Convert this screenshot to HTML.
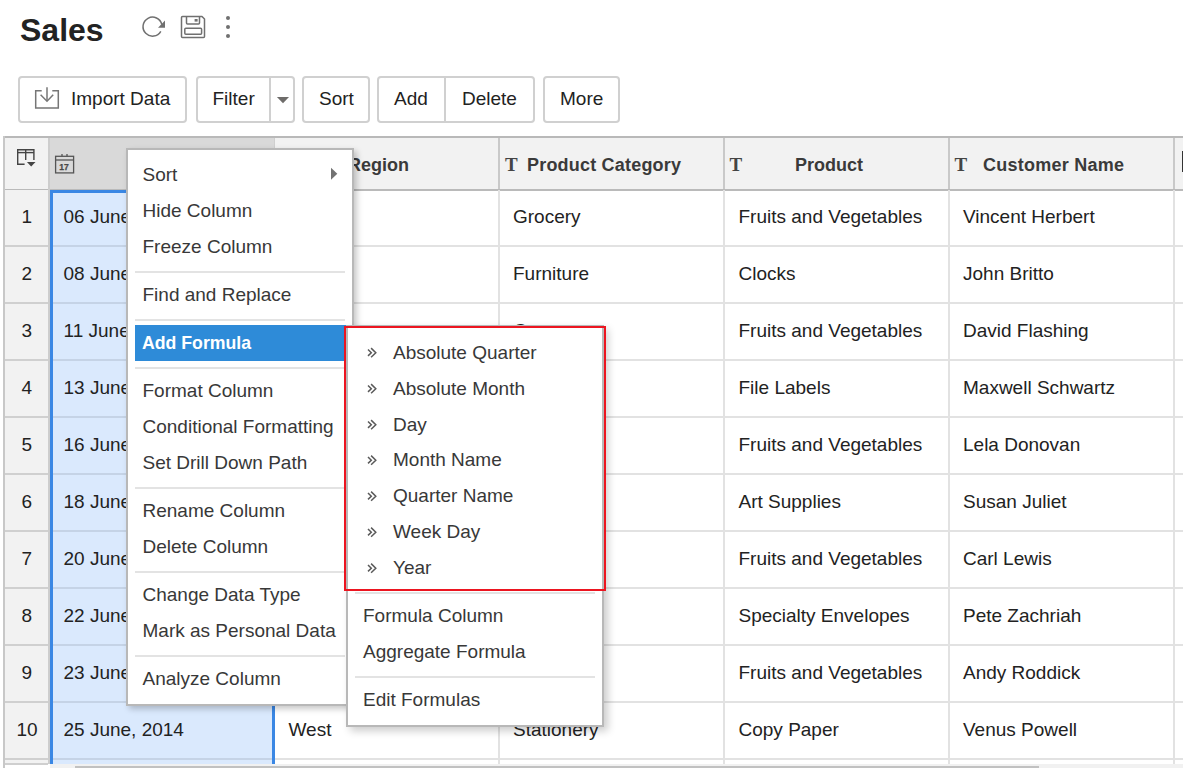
<!DOCTYPE html>
<html><head><meta charset="utf-8"><style>
html,body{margin:0;padding:0;width:1183px;height:768px;overflow:hidden;background:#fff;position:relative;font-family:"Liberation Sans", sans-serif;}
.t{position:absolute;white-space:nowrap;line-height:normal;}
.r{position:absolute;}
</style></head><body>
<div class="t" style="left:20px;top:12px;font-size:32px;color:#222;font-weight:700;">Sales</div>
<svg class="r" style="left:138px;top:12px" width="100" height="30" viewBox="138 12 100 30">
<g fill="none" stroke="#707070" stroke-width="1.5">
<path d="M160.8 31.3 A9.5 9.5 0 1 1 161.8 24.6"/>
<path d="M182.5 16.5 H202 L204.5 19 V36.5 Q204.5 37.5 203.5 37.5 H182.5 Q181.5 37.5 181.5 36.5 V17.5 Q181.5 16.5 182.5 16.5 Z" stroke-linejoin="round"/>
<path d="M186.5 16.5 V23 Q186.5 24 187.5 24 H198.5 Q199.5 24 199.5 23 V16.5"/>
<rect x="184.8" y="28.3" width="16.8" height="6" rx="1"/>
</g>
<path d="M165 20.6 L165 27.7 L158 27.7 Z" fill="#707070"/>
<rect x="194.6" y="19" width="3" height="2.6" fill="#707070"/>
<circle cx="228" cy="18" r="2" fill="#707070"/>
<circle cx="228" cy="27" r="2" fill="#707070"/>
<circle cx="228" cy="36" r="2" fill="#707070"/>
</svg>
<div class="r" style="left:18px;top:76px;width:169px;height:47px;box-sizing:border-box;border:2px solid #d0d0d0;border-radius:4px;background:#fff;"></div>
<div class="r" style="left:196px;top:76px;width:99px;height:47px;box-sizing:border-box;border:2px solid #d0d0d0;border-radius:4px;background:#fff;"></div>
<div class="r" style="left:269px;top:77px;width:2px;height:45px;background:#d0d0d0;"></div>
<div class="r" style="left:302px;top:76px;width:68px;height:47px;box-sizing:border-box;border:2px solid #d0d0d0;border-radius:4px;background:#fff;"></div>
<div class="r" style="left:377px;top:76px;width:158px;height:47px;box-sizing:border-box;border:2px solid #d0d0d0;border-radius:4px;background:#fff;"></div>
<div class="r" style="left:444px;top:77px;width:2px;height:45px;background:#d0d0d0;"></div>
<div class="r" style="left:543px;top:76px;width:77px;height:47px;box-sizing:border-box;border:2px solid #d0d0d0;border-radius:4px;background:#fff;"></div>
<div class="t" style="left:71px;top:88px;font-size:19px;color:#222;">Import Data</div>
<div class="t" style="left:212.5px;top:88px;font-size:19px;color:#222;">Filter</div>
<div class="t" style="left:319px;top:88px;font-size:19px;color:#222;">Sort</div>
<div class="t" style="left:394px;top:88px;font-size:19px;color:#222;">Add</div>
<div class="t" style="left:462px;top:88px;font-size:19px;color:#222;">Delete</div>
<div class="t" style="left:560px;top:88px;font-size:19px;color:#222;">More</div>
<svg class="r" style="left:30px;top:82px" width="35" height="32" viewBox="30 82 35 32">
<g fill="none" stroke="#767676" stroke-width="1.5">
<path d="M41.7 90.8 H35.7 V108 H58.3 V90.8 H52.3"/>
<path d="M47 87.2 V101"/>
<path d="M40.6 94.8 L47 101.2 L53.2 94.8"/>
</g></svg>
<svg class="r" style="left:270px;top:90px" width="25" height="20" viewBox="270 90 25 20">
<path d="M276.9 97 H289 L283 103.2 Z" fill="#6e6c6a"/></svg>
<div class="r" style="left:5px;top:138px;width:1178px;height:51px;background:#f2f2f2;"></div>
<div class="r" style="left:50px;top:138px;width:224px;height:51px;background:#d9d9d9;"></div>
<div class="r" style="left:3px;top:136px;width:1180px;height:2px;background:#b9b9b9;"></div>
<div class="r" style="left:3px;top:136px;width:2px;height:632px;background:#c8c8c8;"></div>
<div class="r" style="left:5px;top:189px;width:1178px;height:1.5px;background:#bababa;"></div>
<div class="r" style="left:5px;top:190px;width:43px;height:574px;background:#f2f2f2;"></div>
<div class="r" style="left:48px;top:138px;width:2px;height:626px;background:#cdcdcd;"></div>
<div class="r" style="left:498px;top:138px;width:2px;height:51px;background:#c9c9c9;"></div>
<div class="r" style="left:498px;top:190px;width:2px;height:574px;background:#e2e2e2;"></div>
<div class="r" style="left:723px;top:138px;width:2px;height:51px;background:#c9c9c9;"></div>
<div class="r" style="left:723px;top:190px;width:2px;height:574px;background:#e2e2e2;"></div>
<div class="r" style="left:948px;top:138px;width:2px;height:51px;background:#c9c9c9;"></div>
<div class="r" style="left:948px;top:190px;width:2px;height:574px;background:#e2e2e2;"></div>
<div class="r" style="left:1173px;top:138px;width:2px;height:51px;background:#c9c9c9;"></div>
<div class="r" style="left:1173px;top:190px;width:2px;height:574px;background:#e2e2e2;"></div>
<div class="r" style="left:274px;top:138px;width:1px;height:51px;background:#cfcfcf;"></div>
<div class="r" style="left:50px;top:190px;width:225px;height:574px;background:#dae9fd;"></div>
<div class="r" style="left:5px;top:245px;width:43px;height:2px;background:#d0d0d0;"></div>
<div class="r" style="left:275px;top:245px;width:908px;height:1.6px;background:#e2e2e2;"></div>
<div class="r" style="left:53px;top:245px;width:219px;height:1.6px;background:#c5d3e6;"></div>
<div class="r" style="left:5px;top:302px;width:43px;height:2px;background:#d0d0d0;"></div>
<div class="r" style="left:275px;top:302px;width:908px;height:1.6px;background:#e2e2e2;"></div>
<div class="r" style="left:53px;top:302px;width:219px;height:1.6px;background:#c5d3e6;"></div>
<div class="r" style="left:5px;top:359px;width:43px;height:2px;background:#d0d0d0;"></div>
<div class="r" style="left:275px;top:359px;width:908px;height:1.6px;background:#e2e2e2;"></div>
<div class="r" style="left:53px;top:359px;width:219px;height:1.6px;background:#c5d3e6;"></div>
<div class="r" style="left:5px;top:416px;width:43px;height:2px;background:#d0d0d0;"></div>
<div class="r" style="left:275px;top:416px;width:908px;height:1.6px;background:#e2e2e2;"></div>
<div class="r" style="left:53px;top:416px;width:219px;height:1.6px;background:#c5d3e6;"></div>
<div class="r" style="left:5px;top:473px;width:43px;height:2px;background:#d0d0d0;"></div>
<div class="r" style="left:275px;top:473px;width:908px;height:1.6px;background:#e2e2e2;"></div>
<div class="r" style="left:53px;top:473px;width:219px;height:1.6px;background:#c5d3e6;"></div>
<div class="r" style="left:5px;top:530px;width:43px;height:2px;background:#d0d0d0;"></div>
<div class="r" style="left:275px;top:530px;width:908px;height:1.6px;background:#e2e2e2;"></div>
<div class="r" style="left:53px;top:530px;width:219px;height:1.6px;background:#c5d3e6;"></div>
<div class="r" style="left:5px;top:587px;width:43px;height:2px;background:#d0d0d0;"></div>
<div class="r" style="left:275px;top:587px;width:908px;height:1.6px;background:#e2e2e2;"></div>
<div class="r" style="left:53px;top:587px;width:219px;height:1.6px;background:#c5d3e6;"></div>
<div class="r" style="left:5px;top:644px;width:43px;height:2px;background:#d0d0d0;"></div>
<div class="r" style="left:275px;top:644px;width:908px;height:1.6px;background:#e2e2e2;"></div>
<div class="r" style="left:53px;top:644px;width:219px;height:1.6px;background:#c5d3e6;"></div>
<div class="r" style="left:5px;top:701px;width:43px;height:2px;background:#d0d0d0;"></div>
<div class="r" style="left:275px;top:701px;width:908px;height:1.6px;background:#e2e2e2;"></div>
<div class="r" style="left:53px;top:701px;width:219px;height:1.6px;background:#c5d3e6;"></div>
<div class="r" style="left:5px;top:758px;width:43px;height:2px;background:#d0d0d0;"></div>
<div class="r" style="left:275px;top:758px;width:908px;height:1.6px;background:#e2e2e2;"></div>
<div class="r" style="left:53px;top:758px;width:219px;height:1.6px;background:#c5d3e6;"></div>
<div class="r" style="left:5px;top:762.5px;width:43px;height:2px;background:#cfcfcf;"></div>
<div class="r" style="left:50px;top:190px;width:225px;height:3px;background:#3a87e4;"></div>
<div class="r" style="left:50px;top:190px;width:3px;height:574px;background:#3a87e4;"></div>
<div class="r" style="left:272px;top:190px;width:3px;height:574px;background:#3a87e4;"></div>
<div class="r" style="left:50px;top:764px;width:1133px;height:4px;background:#f1f1f1;"></div>
<div class="r" style="left:75px;top:766px;width:964px;height:2px;background:#c1c1c1;"></div>
<svg class="r" style="left:10px;top:140px" width="70" height="40" viewBox="10 140 70 40">
<g fill="none" stroke="#444" stroke-width="1.4">
<path d="M24.6 164.3 H17.7 V149.7 H33.9 V160"/>
<path d="M17.7 152.6 H33.9"/>
<path d="M25.7 149.7 V160"/>
</g>
<path d="M26.9 161.9 H35.5 L31.2 166.4 Z" fill="#444"/>
<g fill="none" stroke="#555" stroke-width="1.3">
<rect x="55.6" y="156.3" width="18" height="16.6"/>
<path d="M55.6 160 H73.6"/>
<path d="M62 154 V156.3 M67 154 V156.3"/>
</g>
<text x="64" y="170.4" font-family="Liberation Sans" font-weight="700" font-size="8.6" fill="#484848" stroke="#484848" stroke-width="0.25" text-anchor="middle">17</text>
</svg>
<div class="t" style="left:280.5px;top:154px;font-family:'Liberation Serif',serif;font-weight:700;font-size:19px;color:#444;">T</div>
<div class="t" style="left:348px;top:155px;font-size:18px;color:#3a3a3a;font-weight:700;">Region</div>
<div class="t" style="left:505.0px;top:154px;font-family:'Liberation Serif',serif;font-weight:700;font-size:19px;color:#444;">T</div>
<div class="t" style="left:527px;top:155px;font-size:18px;color:#3a3a3a;font-weight:700;letter-spacing:0.2px;">Product Category</div>
<div class="t" style="left:729.5px;top:154px;font-family:'Liberation Serif',serif;font-weight:700;font-size:19px;color:#444;">T</div>
<div class="t" style="left:795px;top:155px;font-size:18px;color:#3a3a3a;font-weight:700;">Product</div>
<div class="t" style="left:954.5px;top:154px;font-family:'Liberation Serif',serif;font-weight:700;font-size:19px;color:#444;">T</div>
<div class="t" style="left:983px;top:155px;font-size:18px;color:#3a3a3a;font-weight:700;letter-spacing:0.25px;">Customer Name</div>
<div class="r" style="left:1181.5px;top:151px;width:1.6px;height:21px;background:#333;"></div>
<div class="t" style="left:21.5px;top:206px;font-size:19px;color:#222;">1</div>
<div class="t" style="left:63.5px;top:206px;font-size:19px;color:#222;">06 June, 2014</div>
<div class="t" style="left:288.5px;top:206px;font-size:19px;color:#222;">Central</div>
<div class="t" style="left:513px;top:206px;font-size:19px;color:#222;">Grocery</div>
<div class="t" style="left:738.5px;top:206px;font-size:19px;color:#222;">Fruits and Vegetables</div>
<div class="t" style="left:963px;top:206px;font-size:19px;color:#222;">Vincent Herbert</div>
<div class="t" style="left:21.5px;top:263px;font-size:19px;color:#222;">2</div>
<div class="t" style="left:63.5px;top:263px;font-size:19px;color:#222;">08 June, 2014</div>
<div class="t" style="left:288.5px;top:263px;font-size:19px;color:#222;">East</div>
<div class="t" style="left:513px;top:263px;font-size:19px;color:#222;">Furniture</div>
<div class="t" style="left:738.5px;top:263px;font-size:19px;color:#222;">Clocks</div>
<div class="t" style="left:963px;top:263px;font-size:19px;color:#222;">John Britto</div>
<div class="t" style="left:21.5px;top:320px;font-size:19px;color:#222;">3</div>
<div class="t" style="left:63.5px;top:320px;font-size:19px;color:#222;">11 June, 2014</div>
<div class="t" style="left:288.5px;top:320px;font-size:19px;color:#222;">West</div>
<div class="t" style="left:513px;top:320px;font-size:19px;color:#222;">Grocery</div>
<div class="t" style="left:738.5px;top:320px;font-size:19px;color:#222;">Fruits and Vegetables</div>
<div class="t" style="left:963px;top:320px;font-size:19px;color:#222;">David Flashing</div>
<div class="t" style="left:21.5px;top:377px;font-size:19px;color:#222;">4</div>
<div class="t" style="left:63.5px;top:377px;font-size:19px;color:#222;">13 June, 2014</div>
<div class="t" style="left:288.5px;top:377px;font-size:19px;color:#222;">Central</div>
<div class="t" style="left:513px;top:377px;font-size:19px;color:#222;">Stationery</div>
<div class="t" style="left:738.5px;top:377px;font-size:19px;color:#222;">File Labels</div>
<div class="t" style="left:963px;top:377px;font-size:19px;color:#222;">Maxwell Schwartz</div>
<div class="t" style="left:21.5px;top:434px;font-size:19px;color:#222;">5</div>
<div class="t" style="left:63.5px;top:434px;font-size:19px;color:#222;">16 June, 2014</div>
<div class="t" style="left:288.5px;top:434px;font-size:19px;color:#222;">East</div>
<div class="t" style="left:513px;top:434px;font-size:19px;color:#222;">Grocery</div>
<div class="t" style="left:738.5px;top:434px;font-size:19px;color:#222;">Fruits and Vegetables</div>
<div class="t" style="left:963px;top:434px;font-size:19px;color:#222;">Lela Donovan</div>
<div class="t" style="left:21.5px;top:491px;font-size:19px;color:#222;">6</div>
<div class="t" style="left:63.5px;top:491px;font-size:19px;color:#222;">18 June, 2014</div>
<div class="t" style="left:288.5px;top:491px;font-size:19px;color:#222;">South</div>
<div class="t" style="left:513px;top:491px;font-size:19px;color:#222;">Stationery</div>
<div class="t" style="left:738.5px;top:491px;font-size:19px;color:#222;">Art Supplies</div>
<div class="t" style="left:963px;top:491px;font-size:19px;color:#222;">Susan Juliet</div>
<div class="t" style="left:21.5px;top:548px;font-size:19px;color:#222;">7</div>
<div class="t" style="left:63.5px;top:548px;font-size:19px;color:#222;">20 June, 2014</div>
<div class="t" style="left:288.5px;top:548px;font-size:19px;color:#222;">West</div>
<div class="t" style="left:513px;top:548px;font-size:19px;color:#222;">Grocery</div>
<div class="t" style="left:738.5px;top:548px;font-size:19px;color:#222;">Fruits and Vegetables</div>
<div class="t" style="left:963px;top:548px;font-size:19px;color:#222;">Carl Lewis</div>
<div class="t" style="left:21.5px;top:605px;font-size:19px;color:#222;">8</div>
<div class="t" style="left:63.5px;top:605px;font-size:19px;color:#222;">22 June, 2014</div>
<div class="t" style="left:288.5px;top:605px;font-size:19px;color:#222;">North</div>
<div class="t" style="left:513px;top:605px;font-size:19px;color:#222;">Stationery</div>
<div class="t" style="left:738.5px;top:605px;font-size:19px;color:#222;">Specialty Envelopes</div>
<div class="t" style="left:963px;top:605px;font-size:19px;color:#222;">Pete Zachriah</div>
<div class="t" style="left:21.5px;top:662px;font-size:19px;color:#222;">9</div>
<div class="t" style="left:63.5px;top:662px;font-size:19px;color:#222;">23 June, 2014</div>
<div class="t" style="left:288.5px;top:662px;font-size:19px;color:#222;">East</div>
<div class="t" style="left:513px;top:662px;font-size:19px;color:#222;">Grocery</div>
<div class="t" style="left:738.5px;top:662px;font-size:19px;color:#222;">Fruits and Vegetables</div>
<div class="t" style="left:963px;top:662px;font-size:19px;color:#222;">Andy Roddick</div>
<div class="t" style="left:16.5px;top:719px;font-size:19px;color:#222;">10</div>
<div class="t" style="left:63.5px;top:719px;font-size:19px;color:#222;">25 June, 2014</div>
<div class="t" style="left:288.5px;top:719px;font-size:19px;color:#222;">West</div>
<div class="t" style="left:513px;top:719px;font-size:19px;color:#222;">Stationery</div>
<div class="t" style="left:738.5px;top:719px;font-size:19px;color:#222;">Copy Paper</div>
<div class="t" style="left:963px;top:719px;font-size:19px;color:#222;">Venus Powell</div>
<div class="r" style="left:126px;top:148px;width:228px;height:558px;box-sizing:border-box;background:#fff;border:2px solid #b8b8b8;box-shadow:3px 3px 6px rgba(0,0,0,0.22);"></div>
<div class="t" style="left:142.5px;top:164px;font-size:19px;color:#383838;">Sort</div>
<div class="t" style="left:142.5px;top:200px;font-size:19px;color:#383838;">Hide Column</div>
<div class="t" style="left:142.5px;top:236px;font-size:19px;color:#383838;">Freeze Column</div>
<div class="t" style="left:142.5px;top:284px;font-size:19px;color:#383838;">Find and Replace</div>
<div class="t" style="left:142.5px;top:380px;font-size:19px;color:#383838;">Format Column</div>
<div class="t" style="left:142.5px;top:416px;font-size:19px;color:#383838;">Conditional Formatting</div>
<div class="t" style="left:142.5px;top:452px;font-size:19px;color:#383838;">Set Drill Down Path</div>
<div class="t" style="left:142.5px;top:500px;font-size:19px;color:#383838;">Rename Column</div>
<div class="t" style="left:142.5px;top:536px;font-size:19px;color:#383838;">Delete Column</div>
<div class="t" style="left:142.5px;top:584px;font-size:19px;color:#383838;">Change Data Type</div>
<div class="t" style="left:142.5px;top:620px;font-size:19px;color:#383838;">Mark as Personal Data</div>
<div class="t" style="left:142.5px;top:668px;font-size:19px;color:#383838;">Analyze Column</div>
<div class="r" style="left:135px;top:271px;width:210px;height:2px;background:#e3e3e3;"></div>
<div class="r" style="left:135px;top:319px;width:210px;height:2px;background:#e3e3e3;"></div>
<div class="r" style="left:135px;top:367px;width:210px;height:2px;background:#e3e3e3;"></div>
<div class="r" style="left:135px;top:487px;width:210px;height:2px;background:#e3e3e3;"></div>
<div class="r" style="left:135px;top:571px;width:210px;height:2px;background:#e3e3e3;"></div>
<div class="r" style="left:135px;top:655px;width:210px;height:2px;background:#e3e3e3;"></div>
<div class="r" style="left:135px;top:325px;width:211px;height:36px;background:#2e8bd8;"></div>
<div class="t" style="left:142px;top:333px;font-size:17.7px;color:#fff;font-weight:700;">Add Formula</div>
<svg class="r" style="left:325px;top:165px" width="16" height="18" viewBox="325 165 16 18">
<path d="M331 167.8 L337.3 173.8 L331 179.8 Z" fill="#727272"/></svg>
<div class="r" style="left:346px;top:325px;width:258px;height:402px;box-sizing:border-box;background:#fff;border:2px solid #b8b8b8;box-shadow:4px 4px 8px rgba(0,0,0,0.2);"></div>
<div class="t" style="left:393px;top:341.5px;font-size:19px;color:#383838;">Absolute Quarter</div>
<div class="t" style="left:393px;top:377.5px;font-size:19px;color:#383838;">Absolute Month</div>
<div class="t" style="left:393px;top:413.5px;font-size:19px;color:#383838;">Day</div>
<div class="t" style="left:393px;top:449px;font-size:19px;color:#383838;">Month Name</div>
<div class="t" style="left:393px;top:485px;font-size:19px;color:#383838;">Quarter Name</div>
<div class="t" style="left:393px;top:521px;font-size:19px;color:#383838;">Week Day</div>
<div class="t" style="left:393px;top:557px;font-size:19px;color:#383838;">Year</div>
<svg class="r" style="left:346px;top:325px" width="258" height="402" viewBox="346 325 258 402"><g fill="none" stroke="#5a5a5a" stroke-width="1.5"><path d="M368 349.5 L371.3 352.7 L368 355.9 M371.1 348.1 L375.8 352.7 L371.1 357.3"/><path d="M368 385.5 L371.3 388.7 L368 391.9 M371.1 384.1 L375.8 388.7 L371.1 393.3"/><path d="M368 421.5 L371.3 424.7 L368 427.9 M371.1 420.1 L375.8 424.7 L371.1 429.3"/><path d="M368 457.0 L371.3 460.2 L368 463.4 M371.1 455.6 L375.8 460.2 L371.1 464.8"/><path d="M368 493.0 L371.3 496.2 L368 499.4 M371.1 491.6 L375.8 496.2 L371.1 500.8"/><path d="M368 529.0 L371.3 532.2 L368 535.4 M371.1 527.6 L375.8 532.2 L371.1 536.8"/><path d="M368 565.0 L371.3 568.2 L368 571.4 M371.1 563.6 L375.8 568.2 L371.1 572.8"/></g></svg>
<div class="t" style="left:363px;top:605px;font-size:19px;color:#383838;">Formula Column</div>
<div class="t" style="left:363px;top:641px;font-size:19px;color:#383838;">Aggregate Formula</div>
<div class="r" style="left:355px;top:676px;width:240px;height:2px;background:#e3e3e3;"></div>
<div class="t" style="left:363px;top:689px;font-size:19px;color:#383838;">Edit Formulas</div>
<div class="r" style="left:355px;top:591.5px;width:240px;height:2px;background:#e3e3e3;"></div>
<div class="r" style="left:344px;top:326px;width:262px;height:265px;box-sizing:border-box;border:2px solid #ec1520;"></div>
</body></html>
